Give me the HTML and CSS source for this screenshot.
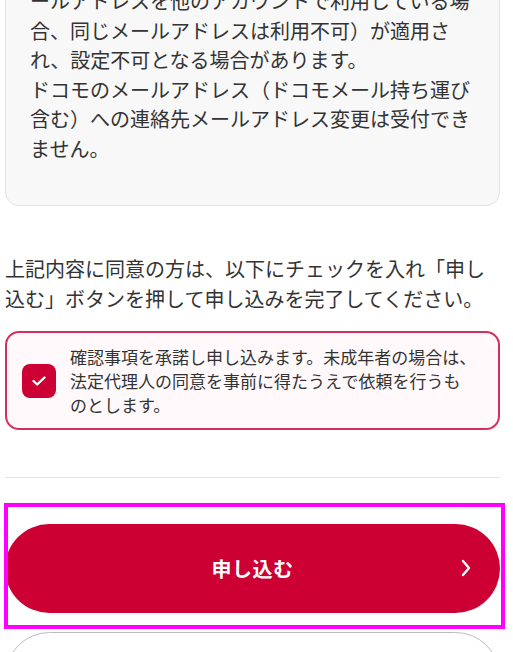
FILE: index.html
```html
<!DOCTYPE html>
<html lang="ja">
<head>
<meta charset="utf-8">
<title>申し込み確認</title>
<link rel="stylesheet" href="styles.css">
</head>
<body>
<main class="page">
  <section class="notice">
    <p>ールアドレスを他のアカウントで利用している場合、同じメールアドレスは利用不可）が適用され、設定不可となる場合があります。</p>
    <p>ドコモのメールアドレス（ドコモメール持ち運び含む）への連絡先メールアドレス変更は受付できません。</p>
  </section>

  <p class="lead">上記内容に同意の方は、以下にチェックを入れ「申し込む」ボタンを押して申し込みを完了してください。</p>

  <label class="agree">
    <span class="checkbox">
      <svg width="14" height="10" viewBox="0 0 14 10" aria-hidden="true"><polyline points="1.5,5 5.2,8.5 12.5,1.5" fill="none" stroke="#fff" stroke-width="2.4" stroke-linecap="round" stroke-linejoin="round"/></svg>
    </span>
    <span class="agree-text">確認事項を承諾し申し込みます。未成年者の場合は<span class="trim">、</span>法定代理人の同意を事前に得たうえで依頼を行うものとします。</span>
  </label>

  <hr class="divider">

  <div class="submit-area">
    <button class="btn-primary" type="button">
      <span>申し込む</span>
      <svg class="chev" width="10" height="18" viewBox="0 0 10 18" aria-hidden="true"><polyline points="2,2 8,9 2,16" fill="none" stroke="#fff" stroke-width="2.4" stroke-linecap="round" stroke-linejoin="round"/></svg>
    </button>
    <div class="highlight"></div>
  </div>

  <button class="btn-secondary" type="button">戻る</button>
</main>
</body>
</html>
```

FILE: styles.css
```css
html, body {
  margin: 0;
  padding: 0;
  background: #ffffff;
  overflow: hidden;
}

body {
  font-family: "Noto Sans CJK JP", "Noto Sans", sans-serif;
  color: #333333;
}

.page {
  width: 495px;
  margin: -39px 0 0 5px;
}

.notice {
  background: #f8f8f8;
  border: 1px solid #e2e2e2;
  border-radius: 14px;
  padding: 24px 24px 42px;
  font-size: 20px;
  line-height: 29.5px;
}

.notice p {
  margin: 0;
}

.lead {
  margin: 48px 0 0;
  font-size: 20px;
  line-height: 30px;
}

.agree {
  display: flex;
  align-items: center;
  gap: 14px;
  margin-top: 17px;
  padding: 12px 24px 12px 15px;
  border: 2px solid #d4305c;
  border-radius: 14px;
  background: #fff9fb;
}

.checkbox {
  flex: 0 0 34px;
  height: 34px;
  border-radius: 8px;
  background: #cc0033;
  display: flex;
  align-items: center;
  justify-content: center;
}

.agree-text {
  font-size: 17px;
  line-height: 23.8px;
}

.trim {
  font-feature-settings: "halt" 1;
}

.divider {
  margin: 47px 0 0;
  border: 0;
  border-top: 1px solid #e4e4e4;
  height: 0;
}

.submit-area {
  position: relative;
  margin-top: 25px;
  padding: 21px 0 16px;
}

.btn-primary {
  position: relative;
  display: flex;
  align-items: center;
  justify-content: center;
  width: 100%;
  height: 89px;
  border: 0;
  border-radius: 45px;
  background: #cc0033;
  color: #ffffff;
  font-family: inherit;
  font-size: 20px;
  font-weight: 700;
  letter-spacing: 0.5px;
  padding: 0;
}

.chev {
  position: absolute;
  right: 29px;
  top: 35px;
}

.highlight {
  position: absolute;
  top: 0;
  left: -1px;
  right: -5px;
  bottom: 0;
  border: 4px solid #ff00ff;
  pointer-events: none;
}

.btn-secondary {
  display: block;
  width: 100%;
  height: 89px;
  margin-top: 3px;
  border: 1.5px solid #bdbdbd;
  border-radius: 45px;
  background: #ffffff;
  color: #cc0033;
  font-family: inherit;
  font-size: 20px;
  font-weight: 700;
}
```
